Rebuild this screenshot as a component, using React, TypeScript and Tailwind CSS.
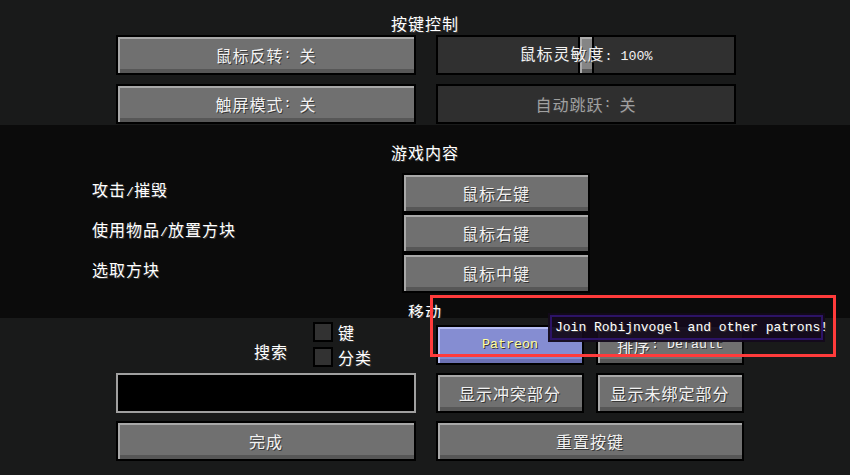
import type { ReactNode } from 'react';

// Latin runs use a narrow mono face so they sit at half the width of the CJK glyphs
function McText({ text }: { text: string }) {
  const parts = text.split(/([\x00-\x7f]+)/).filter(Boolean);
  return (
    <>
      {parts.map((p, i) =>
        /^[\x00-\x7f]+$/.test(p) ? (
          <span
            key={i}
            className="font-['Liberation_Mono',monospace] text-[13.3px] tracking-normal whitespace-pre"
          >
            {p}
          </span>
        ) : (
          <span key={i}>{p}</span>
        )
      )}
    </>
  );
}

type Variant = 'normal' | 'disabled' | 'patreon';

function McButton({
  label,
  variant = 'normal',
  className = '',
}: {
  label: string;
  variant?: Variant;
  className?: string;
}) {
  const look =
    variant === 'disabled'
      ? 'bg-[#2f2f2f] text-[#a0a0a0]'
      : variant === 'patreon'
        ? 'bg-[#858dd2] text-[#ffffa0] shadow-[inset_2px_2px_0_#b6bdf3,inset_0_-4px_0_#6c72b4]'
        : 'bg-[#707070] text-[#f2f2f2] shadow-[inset_2px_2px_0_#a8a8a8,inset_0_-4px_0_#575757]';
  return (
    <div
      className={`flex h-[40px] items-center justify-center border-2 border-black [text-shadow:1px_1px_0_#383838] ${look} ${className}`}
    >
      <McText text={label} />
    </div>
  );
}

function McSlider({ label }: { label: string }) {
  return (
    <div className="relative flex h-[40px] items-center justify-center border-2 border-black bg-[#303030] text-[#f2f2f2] [text-shadow:1px_1px_0_#383838]">
      <div className="absolute top-0 bottom-0 left-[calc(50%-8px)] w-[16px] border-x-2 border-black bg-[#858585] shadow-[inset_2px_2px_0_#ababab,inset_0_-4px_0_#5a5a5a]" />
      <span className="relative">
        <McText text={label} />
      </span>
    </div>
  );
}

function Checkbox({ children }: { children: ReactNode }) {
  return (
    <div className="flex items-center gap-[5px]">
      <div className="h-[20px] w-[20px] border-2 border-black bg-[#323232]" />
      <span className="[text-shadow:1px_1px_0_#383838]">{children}</span>
    </div>
  );
}

const bindings = [
  { action: '攻击/摧毁', key: '鼠标左键' },
  { action: '使用物品/放置方块', key: '鼠标右键' },
  { action: '选取方块', key: '鼠标中键' },
];

export default function App() {
  return (
    <div className="relative h-[475px] w-[850px] overflow-hidden bg-[#191a1a] font-['Noto_Sans_CJK_SC',sans-serif] text-[16px] leading-[20px] tracking-[1px] text-white">
      {/* options header */}
      <div className="h-[125px] pt-[13px]">
        <div className="text-center [text-shadow:1px_1px_0_#383838]">按键控制</div>
        <div className="mt-[2px] ml-[116px] grid w-[620px] grid-cols-[300px_300px] gap-x-[20px] gap-y-[9px]">
          <McButton label="鼠标反转: 关" />
          <McSlider label="鼠标灵敏度: 100%" />
          <McButton label="触屏模式: 关" />
          <McButton label="自动跳跃: 关" variant="disabled" />
        </div>
      </div>

      {/* key binding list */}
      <div className="h-[193px] overflow-hidden bg-[#0b0b0b] pt-[17px]">
        <div className="text-center [text-shadow:1px_1px_0_#383838]">游戏内容</div>
        <div className="mt-[11px]">
          {bindings.map((b) => (
            <div key={b.action} className="flex h-[40px] pl-[92px]">
              <div className="w-[310px] pt-[6px] [text-shadow:1px_1px_0_#383838]">
                <McText text={b.action} />
              </div>
              <McButton label={b.key} className="w-[188px]" />
            </div>
          ))}
        </div>
        <div className="mt-[8px] text-center [text-shadow:1px_1px_0_#383838]">移动</div>
      </div>

      {/* footer */}
      <div className="flex gap-[20px] pl-[116px]">
        <div className="w-[300px]">
          <div className="flex h-[55px]">
            <div className="mt-[23px] ml-[138px] [text-shadow:1px_1px_0_#383838]">搜索</div>
            <div className="mt-[4px] ml-[25px] flex flex-col gap-[5px]">
              <Checkbox>键</Checkbox>
              <Checkbox>分类</Checkbox>
            </div>
          </div>
          <div className="h-[40px] border-2 border-[#a0a0a0] bg-black" />
          <McButton label="完成" className="mt-[8px]" />
        </div>
        <div className="w-[308px] pt-[7px]">
          <div className="flex gap-[12px]">
            <McButton label="Patreon" variant="patreon" className="w-[148px]" />
            <McButton label="排序: Default" className="w-[148px]" />
          </div>
          <div className="mt-[8px] flex gap-[12px]">
            <McButton label="显示冲突部分" className="w-[148px]" />
            <McButton label="显示未绑定部分" className="w-[148px]" />
          </div>
          <McButton label="重置按键" className="mt-[8px]" />
        </div>
      </div>

      {/* hover tooltip */}
      <div className="absolute top-[313px] left-[548px] h-[29px] w-[277px] bg-[#13091b]/95 p-[2px]">
        <div className="flex h-full items-center border-2 border-[#2c1366] pl-[3px] font-['Liberation_Mono',monospace] text-[13px] tracking-normal whitespace-nowrap [text-shadow:1px_1px_0_#3a3a3a]">
          Join Robijnvogel and other patrons!
        </div>
      </div>

      {/* annotation frame */}
      <div className="pointer-events-none absolute top-[295px] left-[430px] h-[62px] w-[406px] border-[3px] border-[#ff3b3b]" />
    </div>
  );
}
